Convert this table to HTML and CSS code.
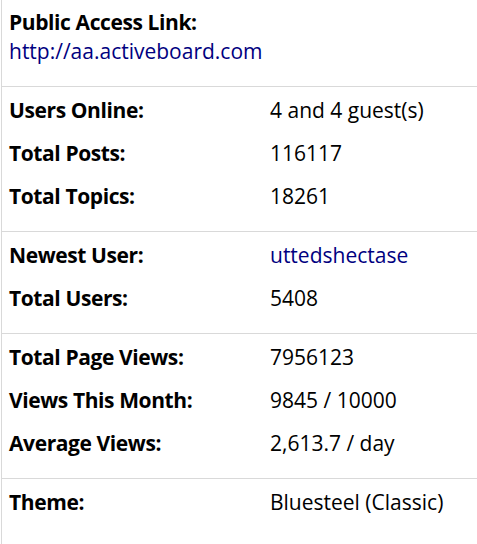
FILE: index.html
```html
<!DOCTYPE html>
<html>
<head>
<meta charset="utf-8">
<link rel="stylesheet" href="styles.css">
</head>
<body>
<div class="panel">
  <div class="section top">
    <div class="label">Public Access Link:</div>
    <a class="link" href="#">http://aa.activeboard.com</a>
  </div>
  <div class="section">
    <div class="row"><span class="label">Users Online:</span><span class="value">4 and 4 guest(s)</span></div>
    <div class="row"><span class="label">Total Posts:</span><span class="value">116117</span></div>
    <div class="row"><span class="label">Total Topics:</span><span class="value">18261</span></div>
  </div>
  <div class="section">
    <div class="row"><span class="label">Newest User:</span><a class="value link" href="#">uttedshectase</a></div>
    <div class="row"><span class="label">Total Users:</span><span class="value">5408</span></div>
  </div>
  <div class="section">
    <div class="row"><span class="label">Total Page Views:</span><span class="value">7956123</span></div>
    <div class="row"><span class="label">Views This Month:</span><span class="value">9845 / 10000</span></div>
    <div class="row"><span class="label">Average Views:</span><span class="value">2,613.7 / day</span></div>
  </div>
  <div class="section last">
    <div class="row"><span class="label">Theme:</span><span class="value">Bluesteel (Classic)</span></div>
  </div>
</div>
</body>
</html>
```
FILE: styles.css
```css
html, body {
  margin: 0;
  padding: 0;
  background: #fff;
}
body {
  font-family: "Open Sans", Lato, sans-serif;
  font-size: 21px;
  color: #000;
}
.panel {
  margin-left: 1px;
  border-left: 1px solid #d9d9d9;
  min-height: 544px;
}
.section {
  border-bottom: 1px solid #d9d9d9;
  padding: 2px 0 13px 7px;
}
.section.top {
  padding: 8px 0 20px 7px;
  line-height: 29px;
}
.section.last {
  border-bottom: none;
}
.top .label {
  display: block;
}
.label {
  font-weight: bold;
  letter-spacing: -0.4px;
}
.row {
  display: grid;
  grid-template-columns: 261px 1fr;
  line-height: 43px;
  white-space: nowrap;
}
.link {
  color: #000080;
  text-decoration: none;
}
```
